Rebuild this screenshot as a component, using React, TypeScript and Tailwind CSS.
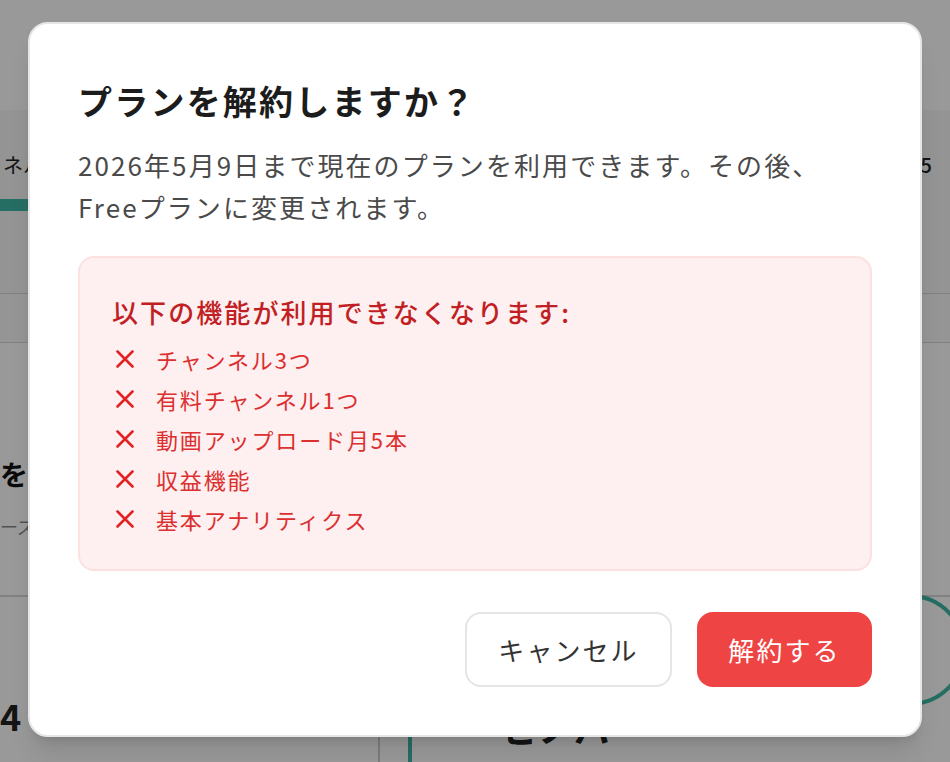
import React from "react";

const features = [
  "チャンネル3つ",
  "有料チャンネル1つ",
  "動画アップロード月5本",
  "収益機能",
  "基本アナリティクス",
];

const CrossIcon = () => (
  <svg width="18" height="18" viewBox="0 0 18 18" className="shrink-0 text-[#e02424]">
    <path d="M1.5 1.5 L16.5 16.5 M16.5 1.5 L1.5 16.5" stroke="currentColor" strokeWidth="2.6" strokeLinecap="round" />
  </svg>
);

// page behind the dialog, only slivers of it are visible
const BackgroundPage = () => (
  <div className="flex flex-col">
    <div className="h-[110px] bg-white" />
    <div className="h-[183px] bg-[#f7f7f7]">
      <div className="flex items-center justify-between pl-[3px] pr-[18px] pt-[40px]">
        <span className="text-[20px] text-[#222]">ネル数</span>
        <span className="text-[20px] font-medium text-[#222]">5</span>
      </div>
      <div className="mt-[19px] h-3 w-[600px] bg-[#3fb8a5]" />
    </div>
    <div className="h-[50px] border-t border-b border-[#d8d8d8] bg-[#f9f9f9]" />
    <div className="h-[252px] bg-white pt-[110px]">
      <div className="text-[28px] font-bold text-[#111]">を選択</div>
      <div className="mt-[18px] text-[18px] text-[#888]">ーズ</div>
    </div>
    <div className="grid h-[170px] grid-cols-[380px_28px_1fr] border-t-2 border-[#d8d8d8]">
      <div className="border-r-2 border-[#cfcfcf] pt-[100px] text-[36px] font-bold leading-none text-[#222]">4</div>
      <div />
      <div className="flex border-l-4 border-[#3fb8a5] pl-[90px] pt-[112px]">
        <span className="text-[36px] font-bold leading-none text-[#222]">ピノパ</span>
      </div>
    </div>
  </div>
);

export default function App() {
  return (
    <div className="relative h-[762px] w-[950px] overflow-hidden bg-white font-['Noto_Sans_CJK_JP',sans-serif]">
      <BackgroundPage />
      <div className="absolute left-[854px] top-[594px] h-[112px] w-[112px] rounded-full border-4 border-[#3fb8a5]" />

      <div className="absolute inset-0 flex justify-center bg-black/40 pt-[22px]">
        <div className="h-fit w-[894px] rounded-[20px] border-2 border-[#e6e6e6] bg-white px-12 pb-12 pt-14 shadow-xl">
          <h2 className="text-[34px] font-bold leading-[42px] tracking-[0.065em] text-[#1c1c1c]">
            プランを解約しますか？
          </h2>
          <p className="mt-[22px] text-[26px] leading-[42px] tracking-[0.08em] text-[#4a4a4a]">
            2026年5月9日まで現在のプランを利用できます。その後、
            <br />
            Freeプランに変更されます。
          </p>

          <div className="mt-7 rounded-2xl border-2 border-[#fde0e0] bg-[#fef0f0] pb-[30px] pl-[32px] pt-[34px]">
            <p className="text-[26px] font-medium leading-[39px] tracking-[0.08em] text-[#c11f24]">
              以下の機能が利用できなくなります:
            </p>
            <ul className="mt-2">
              {features.map((f) => (
                <li key={f} className="flex h-10 items-center gap-[22px] pl-1">
                  <CrossIcon />
                  <span className="text-[22px] tracking-[0.085em] text-[#dc2f2f]">{f}</span>
                </li>
              ))}
            </ul>
          </div>

          <div className="mt-[41px] flex justify-end gap-[25px]">
            <button className="h-[75px] w-[207px] rounded-2xl border-2 border-[#e5e5e5] bg-white text-[26px] tracking-[0.08em] text-[#333]">
              キャンセル
            </button>
            <button className="h-[75px] w-[175px] rounded-2xl bg-[#ef4444] text-[26px] tracking-[0.08em] text-white">
              解約する
            </button>
          </div>
        </div>
      </div>
    </div>
  );
}
